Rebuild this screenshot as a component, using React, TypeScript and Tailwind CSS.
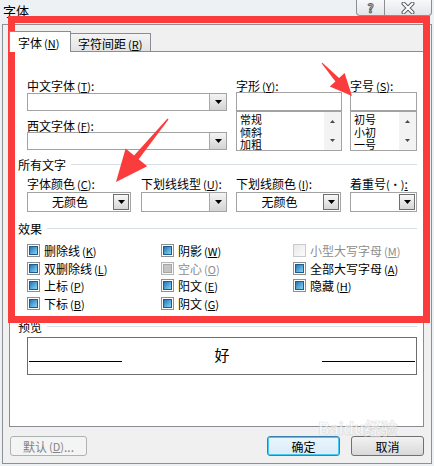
import React from "react";

const FONT = "font-['Noto_Sans_CJK_SC','Noto_Sans',sans-serif]";

function Acc({ k }: { k: string }) {
  return (
    <span className="ml-[2px] text-[11px]">
      (<span className="underline underline-offset-[1px]">{k}</span>)
    </span>
  );
}

function Tri() {
  return (
    <svg width="7" height="4" viewBox="0 0 7 4">
      <path d="M0 0h7L3.5 4z" fill="#000" />
    </svg>
  );
}

function Combo({ text, inset, tall }: { text?: string; inset?: boolean; tall?: boolean }) {
  return (
    <div className={`${tall ? "h-[20px]" : "h-[18px]"} border border-[#a3a3a3] bg-white flex`}>
      <div className="flex-1 text-center leading-[18px]">{text}</div>
      {inset ? (
        <div className="w-[16px] m-[1px] border border-[#6e6e6e] bg-linear-to-b from-[#f8f8f8] to-[#d6d6d6] flex items-center justify-center">
          <Tri />
        </div>
      ) : (
        <div className="w-[17px] border-l border-[#a9a9a9] bg-linear-to-b from-[#f4f4f4] to-[#d4d4d4] flex items-center justify-center">
          <Tri />
        </div>
      )}
    </div>
  );
}

function ListBox({ items }: { items: string[] }) {
  return (
    <div className="h-[40px] border border-[#a3a3a3] bg-white flex">
      <div className="flex-1 pl-[3px] pt-[1px] text-[11px] leading-[12.5px] overflow-hidden">
        {items.map((t) => (
          <div key={t}>{t}</div>
        ))}
      </div>
      <div className="w-[17px] bg-[#f3f3f3] flex flex-col items-center justify-between py-[8px]">
        <svg width="5" height="3" viewBox="0 0 5 3">
          <path d="M2.5 0L5 3H0z" fill="#4a4a4a" />
        </svg>
        <svg width="5" height="3" viewBox="0 0 5 3">
          <path d="M0 0h5L2.5 3z" fill="#4a4a4a" />
        </svg>
      </div>
    </div>
  );
}

function Box({ state }: { state: "on" | "dim" | "off" }) {
  if (state === "off")
    return <div className="w-[13px] h-[13px] border border-[#cacaca] bg-linear-to-br from-[#e9e9e9] to-[#fbfbfb]" />;
  return (
    <div className={`w-[13px] h-[13px] border p-[1px] ${state === "on" ? "border-[#8e8f8f] bg-white" : "border-[#b5b5b5] bg-[#f7f7f7]"}`}>
      <div
        className={
          state === "on"
            ? "w-full h-full border border-[#1d5b8e] bg-linear-to-br from-[#2474b4] to-[#86d6f5]"
            : "w-full h-full border border-[#a6a6a6] bg-[#c4c4c4]"
        }
      />
    </div>
  );
}

function Header({ text }: { text: string }) {
  return (
    <div className="pl-[8px] flex items-center gap-[5px] h-[13px]">
      <span>{text}</span>
      <div className="flex-1 h-px bg-[#d8dfe6]" />
    </div>
  );
}

const effects: [("on" | "dim" | "off"), string, string][][] = [
  [["on", "删除线", "K"], ["on", "阴影", "W"], ["off", "小型大写字母", "M"]],
  [["on", "双删除线", "L"], ["dim", "空心", "O"], ["on", "全部大写字母", "A"]],
  [["on", "上标", "P"], ["on", "阳文", "E"], ["on", "隐藏", "H"]],
  [["on", "下标", "B"], ["on", "阴文", "G"]],
];
const rowGap = ["", "mt-[5px]", "mt-[4px]", "mt-[5px]"];
const colW = ["w-[134px]", "w-[132px]", "w-[120px]"];

export default function App() {
  return (
    <div className={`${FONT} relative w-[434px] h-[466px] overflow-hidden bg-[#eef1f4] text-[12px] leading-[13px] text-black`}>
      {/* title bar */}
      <div className="h-[24px] flex justify-between">
        <div className="pl-[3px] pt-[3px] text-[13px] leading-[15px]">字体</div>
        <div className="flex h-[16px] mr-[2px]">
          <div className="w-[29px] border border-t-0 border-[#8a8f96] rounded-bl-[4px] bg-linear-to-b from-[#f7f8fa] to-[#e2e5e9] flex items-center justify-center">
            <span className="text-[12px] leading-[14px] font-bold text-white [-webkit-text-stroke:1px_#5b5f66]">?</span>
          </div>
          <div className="w-[47px] border border-t-0 border-l-0 border-[#8a8f96] rounded-br-[4px] bg-linear-to-b from-[#f7f8fa] to-[#e2e5e9] flex items-center justify-center">
            <svg width="14" height="12" viewBox="0 0 14 12">
              <path d="M2.5 1.5L11.5 10.5M11.5 1.5L2.5 10.5" stroke="#5b5f66" strokeWidth="4" strokeLinecap="round" />
              <path d="M2.5 1.5L11.5 10.5M11.5 1.5L2.5 10.5" stroke="#fff" strokeWidth="2" strokeLinecap="round" />
            </svg>
          </div>
        </div>
      </div>

      {/* client area */}
      <div className="mx-[2px] h-[440px] border border-[#8d9196] bg-[#f0f0f0] flex flex-col pl-[6px] pr-[7px]">
        {/* tabs */}
        <div className="h-[26px] flex items-end">
          <div className="relative z-10 w-[62px] h-[21px] -mb-px border border-b-0 border-[#898c95] bg-white pl-[8px] pt-[4px]">
            字体<Acc k="N" />
          </div>
          <div className="w-[81px] h-[18px] -ml-px border border-b-0 border-[#898c95] bg-linear-to-b from-[#f4f4f4] to-[#e3e3e3] pl-[7px] pt-[3px]">
            字符间距<Acc k="R" />
          </div>
        </div>

        {/* tab page */}
        <div className="h-[376px] border border-[#898c95] bg-white pr-[6px] pt-[27px]">
          {/* row A */}
          <div className="flex pl-[17px]">
            <div className="w-[200px]">
              <div className="h-[13px]">
                中文字体<Acc k="T" />:
              </div>
              <div className="mt-[1px]">
                <Combo />
              </div>
              <div className="h-[13px] mt-[8px]">
                西文字体<Acc k="F" />:
              </div>
              <Combo />
            </div>
            <div className="w-[106px] ml-[9px]">
              <div className="h-[13px]">
                字形<Acc k="Y" />:
              </div>
              <div className="h-[19px] border border-[#a3a3a3] bg-white" />
              <ListBox items={["常规", "倾斜", "加粗"]} />
            </div>
            <div className="w-[67px] ml-[8px]">
              <div className="h-[13px]">
                字号<Acc k="S" />:
              </div>
              <div className="h-[19px] border border-[#a3a3a3] bg-white" />
              <ListBox items={["初号", "小初", "一号"]} />
            </div>
          </div>

          {/* 所有文字 */}
          <div className="mt-[7px]">
            <Header text="所有文字" />
          </div>
          <div className="flex pl-[17px] mt-[6px]">
            <div className="w-[104px]">
              <div className="h-[13px]">
                字体颜色<Acc k="C" />:
              </div>
              <div className="mt-[2px]">
                <Combo text="无颜色" inset tall />
              </div>
            </div>
            <div className="w-[86px] ml-[10px]">
              <div className="h-[13px] whitespace-nowrap">
                下划线线型<Acc k="U" />:
              </div>
              <div className="mt-[2px]">
                <Combo tall />
              </div>
            </div>
            <div className="w-[105px] ml-[9px]">
              <div className="h-[13px] whitespace-nowrap">
                下划线颜色<Acc k="I" />:
              </div>
              <div className="mt-[2px]">
                <Combo text="无颜色" inset tall />
              </div>
            </div>
            <div className="w-[67px] ml-[9px]">
              <div className="h-[13px] whitespace-nowrap">
                着重号<span className="text-[11px]">(·)</span>
                <span className="underline">:</span>
              </div>
              <div className="mt-[2px]">
                <Combo inset tall />
              </div>
            </div>
          </div>

          {/* 效果 */}
          <div className="mt-[10px]">
            <Header text="效果" />
          </div>
          <div className="mt-[9px] pl-[17px]">
            {effects.map((row, i) => (
              <div key={i} className={`flex h-[13px] ${rowGap[i]}`}>
                {row.map(([st, label, k], j) => (
                  <div key={label} className={`${colW[j]} flex items-center gap-[4px]`}>
                    <Box state={st} />
                    <span className={`whitespace-nowrap ${st === "on" ? "text-black" : "text-[#8d8d8d]"}`}>
                      {label}
                      <Acc k={k} />
                    </span>
                  </div>
                ))}
              </div>
            ))}
          </div>

          {/* 预览 */}
          <div className="mt-[10px]">
            <Header text="预览" />
          </div>
          <div className="ml-[17px] mt-[4px] h-[38px] border border-[#6d6d6d] flex items-end pb-[12px] px-[1px]">
            <div className="w-[93px] h-px bg-black" />
            <div className="flex-1 text-center text-[15px] leading-[16px] -mb-[1px]">好</div>
            <div className="w-[93px] h-px bg-black" />
          </div>
        </div>

        {/* buttons */}
        <div className="mt-[9px] flex pl-[1px]">
          <div className="w-[77px] h-[20px] border border-[#adb2b5] rounded-[3px] bg-[#f4f4f4] text-[#838383] flex items-center justify-center">
            默认<Acc k="D" />...
          </div>
          <div className="flex-1" />
          <div className="w-[73px] h-[20px] border border-[#3c7fb1] rounded-[3px] bg-linear-to-b from-[#eaf6fd] to-[#d9ecf8] shadow-[inset_0_0_0_1px_#48c8f0] flex items-center justify-center">
            确定
          </div>
          <div className="w-[73px] h-[20px] ml-[11px] border border-[#707070] rounded-[3px] bg-linear-to-b from-[#f2f2f2] to-[#d9d9d9] flex items-center justify-center">
            取消
          </div>
        </div>
      </div>

      {/* watermark */}
      <div className="absolute left-[318px] top-[419px] pointer-events-none opacity-60">
        <div className="text-[17px] leading-[18px] font-bold text-white [-webkit-text-stroke:0.6px_#c9c9c9] tracking-[-0.5px]">
          Baidu经验
        </div>
      </div>

      {/* red annotation frame */}
      <div className="absolute left-[8px] top-[16px] w-[422px] h-[307px] border-[7px] border-[#fb3c3c] pointer-events-none" />

      {/* red arrows */}
      <svg className="absolute left-0 top-0 pointer-events-none" width="434" height="466" viewBox="0 0 434 466">
        <polygon fill="#fb3c3c" points="322.4,62.7 339.1,78 344.6,73 352,96 329.8,86.4 335.4,81.4 321.6,63.3" />
        <polygon fill="#fb3c3c" points="168.5,119.4 138.7,159.2 147.2,166.2 116,182 125.6,148.4 134.1,155.4 167.5,118.6" />
      </svg>
    </div>
  );
}
